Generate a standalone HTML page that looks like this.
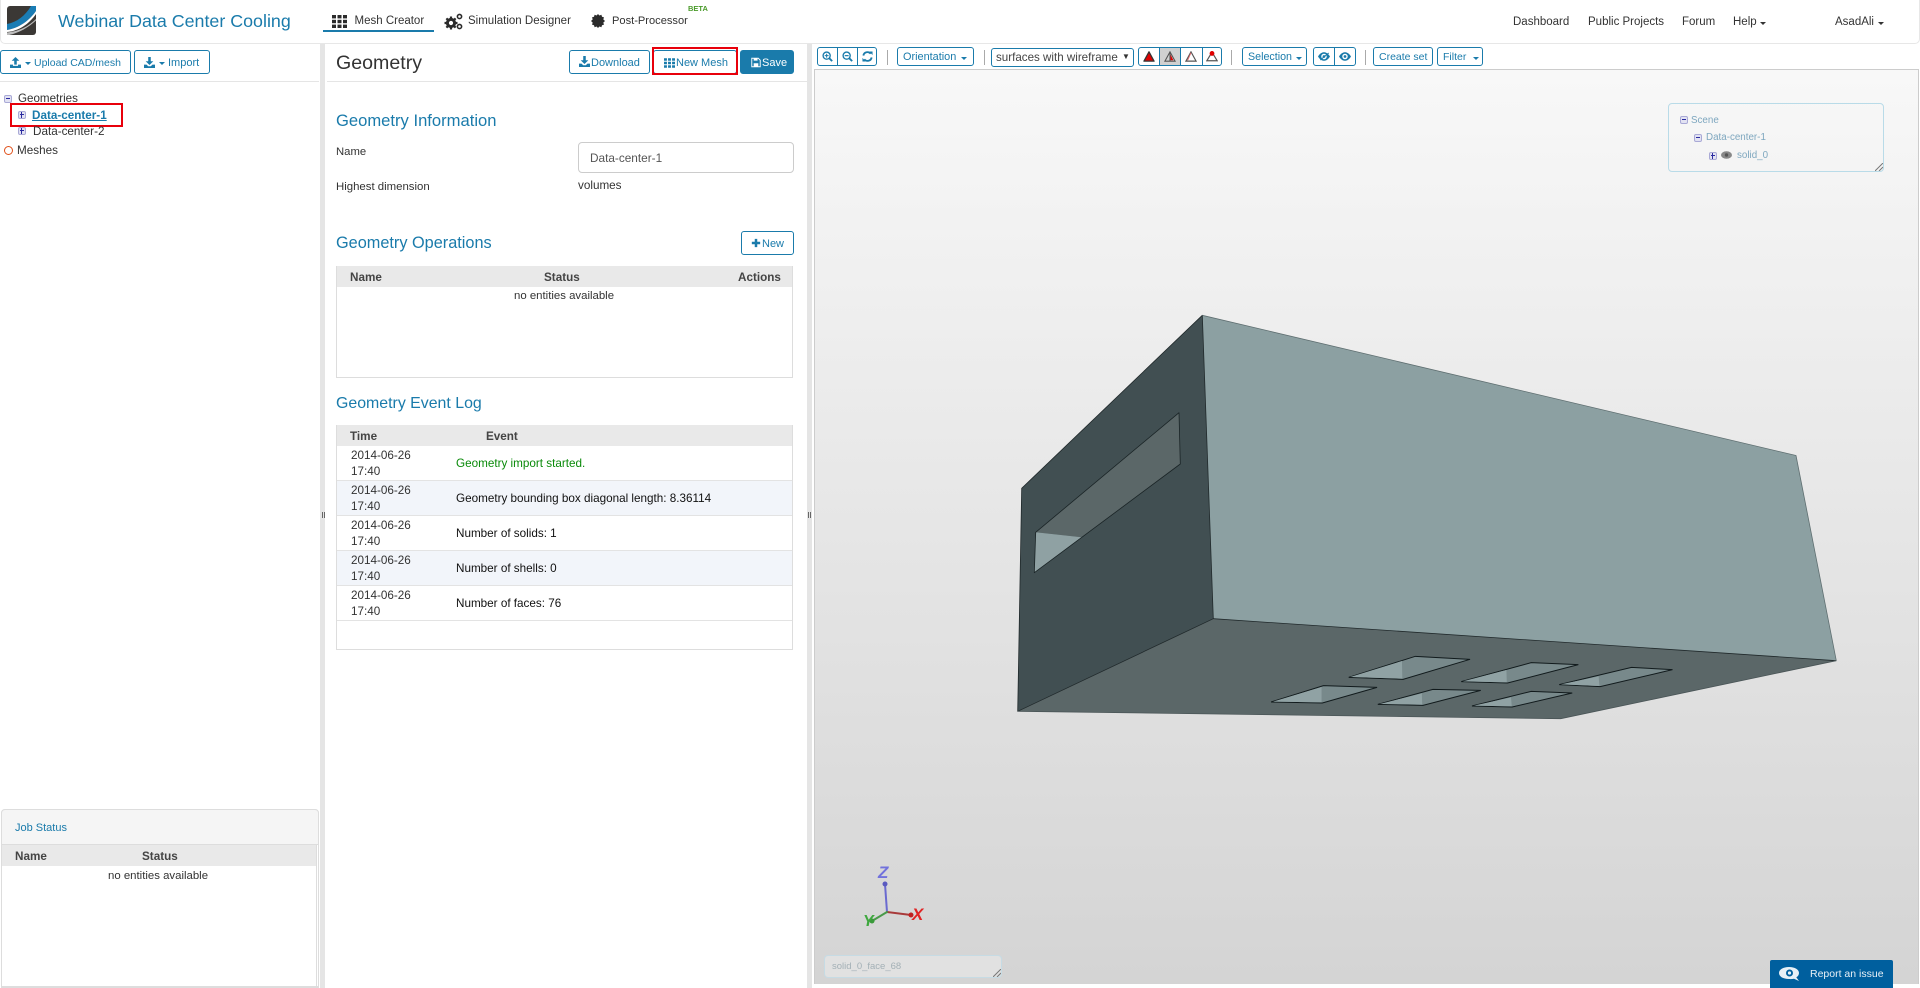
<!DOCTYPE html>
<html lang="en">
<head>
<meta charset="utf-8">
<title>Webinar Data Center Cooling</title>
<style>
html,body{margin:0;padding:0;width:1920px;height:988px;overflow:hidden;background:#fff;font-family:"Liberation Sans",sans-serif;color:#333}
.t{position:absolute;white-space:nowrap;line-height:16px;height:16px}
.b{position:absolute;box-sizing:border-box;}
.btn{position:absolute;box-sizing:border-box;border:1px solid #1a7bab;border-radius:3px;background:#fff;color:#1a7bab;font-size:11px;white-space:nowrap}
.btn .l{position:absolute;top:4px;line-height:16px;white-space:nowrap}
.btn svg,.ic{position:absolute}
.blue{color:#1a7bab}
.h{color:#1a7bab;line-height:20px;height:20px}
.nav{font-size:11.5px;color:#333}
.th{font-weight:bold;font-size:11.7px;color:#444}
.ev{font-size:11.7px;color:#111}
.dt{font-size:11.7px;color:#333}
.caret{position:absolute;width:0;height:0;border-left:3px solid transparent;border-right:3px solid transparent;border-top:3px solid currentColor}
.sep{position:absolute;width:1px;height:15px;top:50px;background:#aaa}
.tree{position:absolute;width:8px;height:8px;box-sizing:border-box;border:1px solid #a9a9d6;border-radius:2px;background:#e2e2f2}
.tree:before{content:"";position:absolute;left:1px;right:1px;top:2px;height:1px;background:#2a2aa0}
.tree.p:after{content:"";position:absolute;top:0;bottom:0;left:2px;width:1px;background:#2a2aa0}
.tw{color:#7ea7bf;font-size:9.8px}
</style>
</head>
<body>
<svg width="0" height="0" style="position:absolute">
<defs>
<symbol id="grid" viewBox="0 0 15 13"><g fill="currentColor"><rect x="0" y="0" width="4" height="3.4"/><rect x="5.5" y="0" width="4" height="3.4"/><rect x="11" y="0" width="4" height="3.4"/><rect x="0" y="4.8" width="4" height="3.4"/><rect x="5.5" y="4.8" width="4" height="3.4"/><rect x="11" y="4.8" width="4" height="3.4"/><rect x="0" y="9.6" width="4" height="3.4"/><rect x="5.5" y="9.6" width="4" height="3.4"/><rect x="11" y="9.6" width="4" height="3.4"/></g></symbol>
<symbol id="dl" viewBox="0 0 13 13"><path fill="currentColor" d="M5 0h3v5h3L6.500 9.500 2 5h3zM0 9h3l2 2h3l2-2h3v4H0z"/></symbol>
<symbol id="ul" viewBox="0 0 13 13"><path fill="currentColor" d="M6.500 0L11 4.500H8v4.500H5V4.500H2zM0 9h3.500v1.500h6V9H13v4H0z"/></symbol>
<symbol id="save" viewBox="0 0 13 13"><path fill="none" stroke="currentColor" stroke-width="1.200" d="M1 1h8.500L12 3.500V12H1z"/><path fill="currentColor" d="M3.500 1h5v3h-5zM3.500 7.500h6V12h-6z"/></symbol>
<symbol id="zoomin" viewBox="0 0 13 13"><circle cx="5.500" cy="5.500" r="4.200" fill="none" stroke="currentColor" stroke-width="1.600"/><path stroke="currentColor" stroke-width="2.200" d="M8.500 8.500l3.500 3.500"/><path stroke="currentColor" stroke-width="1.200" d="M3.200 5.500h4.600M5.500 3.200v4.600"/></symbol>
<symbol id="zoomout" viewBox="0 0 13 13"><circle cx="5.500" cy="5.500" r="4.200" fill="none" stroke="currentColor" stroke-width="1.600"/><path stroke="currentColor" stroke-width="2.200" d="M8.500 8.500l3.500 3.500"/><path stroke="currentColor" stroke-width="1.400" d="M3.200 5.500h4.600"/></symbol>
<symbol id="eye" viewBox="0 0 14 10"><path fill="currentColor" d="M0 5C2 1.500 4.500 0 7 0s5 1.500 7 5c-2 3.500-4.500 5-7 5S2 8.500 0 5zm7-3.200A3.200 3.200 0 1 0 7 8.200 3.200 3.200 0 0 0 7 1.800zM7 3.400a1.600 1.600 0 1 1 0 3.200 1.600 1.600 0 0 1 0-3.200z"/></symbol>
</defs>
</svg>

<!-- Navbar -->
<div class="b" style="left:0;top:0;width:1920px;height:44px;background:#fff;border:1px solid #e7e7e7;border-top:0;border-radius:0 0 5px 5px"></div>
<svg class="ic" style="left:7px;top:6px" width="29" height="29" viewBox="0 0 29 29">
<rect width="29" height="29" rx="3" fill="#3b3835"/>
<path d="M0 18C10 16 18 10 24 0h5v5C22 15 12 22 0 24z" fill="#1a7cb4"/>
<path d="M0 24C12 22 22 15 29 5v3C22 18 12 25 0 26z" fill="#fff"/>
<path d="M0 26.500C12 25.500 22 20 29 13v1.500C22 21 12 27 2 29H0z" fill="#bdbdbd"/>
</svg>
<div class="t blue" style="left:58px;top:13px;font-size:17.850px">Webinar Data Center Cooling</div>

<svg class="ic" style="left:332px;top:15px;color:#2b2b2b" width="15" height="13"><use href="#grid"/></svg>
<div class="t nav" style="left:354.500px;top:13px">Mesh Creator</div>
<div class="b" style="left:323px;top:30px;width:111px;height:2px;background:#1a7bab"></div>

<svg class="ic" style="left:444px;top:12px" width="20" height="19" viewBox="0 0 20 19">
<g fill="none" stroke="#2b2b2b"><circle cx="7" cy="11" r="3.600" stroke-width="3"/><path stroke-width="2.200" d="M7 4.500v2M7 15.500v2M.5 11h2M11.500 11h2M2.400 6.400l1.400 1.400M10.200 14.200l1.400 1.400M2.400 15.600l1.400-1.400M10.200 7.800l1.400-1.400"/><circle cx="15.500" cy="4.500" r="2.100" stroke-width="1.600"/><circle cx="15.500" cy="14.500" r="2.100" stroke-width="1.600"/></g>
</svg>
<div class="t nav" style="left:468px;top:13px">Simulation Designer</div>

<svg class="ic" style="left:591px;top:14px" width="14" height="14" viewBox="0 0 14 14">
<path fill="#2b2b2b" d="M7 0l1.400 1.500 2-.7.600 2 2 .6-.7 2L14 7l-1.700 1.600.7 2-2 .6-.6 2-2-.7L7 14l-1.400-1.500-2 .7-.6-2-2-.6.7-2L0 7l1.700-1.600-.7-2 2-.6.6-2 2 .7z"/>
</svg>
<div class="t nav" style="left:612px;top:13px;font-size:11.100px">Post-Processor</div>
<div class="t" style="left:688px;top:1px;font-size:7.500px;color:#4a9a2a;font-weight:bold">BETA</div>

<div class="t nav" style="left:1513px;top:14px">Dashboard</div>
<div class="t nav" style="left:1588px;top:14px">Public Projects</div>
<div class="t nav" style="left:1682px;top:14px">Forum</div>
<div class="t nav" style="left:1733px;top:14px">Help</div>
<div class="caret" style="left:1760px;top:22px;color:#333"></div>
<div class="t nav" style="left:1835px;top:14px">AsadAli</div>
<div class="caret" style="left:1878px;top:22px;color:#333"></div>

<!-- Splitters -->
<div class="b" style="left:320px;top:44px;width:5px;height:944px;background:#e5e5e5"></div>
<div class="b" style="left:807px;top:44px;width:5px;height:944px;background:#e5e5e5"></div>
<div class="b" style="left:322px;top:512px;width:1px;height:6px;background:#666"></div>
<div class="b" style="left:324px;top:512px;width:1px;height:6px;background:#666"></div>
<div class="b" style="left:808px;top:512px;width:1px;height:6px;background:#666"></div>
<div class="b" style="left:810px;top:512px;width:1px;height:6px;background:#666"></div>

<!-- Left panel -->
<div class="btn" style="left:0;top:50px;width:131px;height:24px">
<svg style="left:9px;top:6px;" width="11" height="11"><use href="#ul"/></svg>
<div class="caret" style="left:24px;top:11px"></div>
<span class="l" style="left:33px;font-size:10.500px">Upload CAD/mesh</span></div>
<div class="btn" style="left:134px;top:50px;width:76px;height:24px">
<svg style="left:9px;top:6px" width="11" height="11"><use href="#dl"/></svg>
<div class="caret" style="left:24px;top:11px"></div>
<span class="l" style="left:33px;font-size:11px">Import</span></div>
<div class="b" style="left:0;top:81px;width:319px;height:1px;background:#e5e5e5"></div>

<div class="tree" style="left:4px;top:95px"></div>
<div class="t" style="left:18px;top:91px;font-size:11.600px">Geometries</div>
<div class="tree p" style="left:18px;top:111px"></div>
<div class="t blue" style="left:32px;top:108px;font-size:11.700px;font-weight:bold;text-decoration:underline">Data-center-1</div>
<div class="b" style="left:10px;top:103px;width:113px;height:24px;border:2px solid #e8000b"></div>
<div class="tree p" style="left:18px;top:127px"></div>
<div class="t" style="left:33px;top:124px;font-size:11.700px">Data-center-2</div>
<div class="b" style="left:4px;top:146px;width:9px;height:9px;border:1.500px solid #e0501a;border-radius:50%"></div>
<div class="t" style="left:17px;top:143px;font-size:11.700px">Meshes</div>

<div class="b" style="left:1px;top:809px;width:318px;height:179px;border:1px solid #ddd;border-radius:4px 4px 0 0;background:#fff"></div>
<div class="b" style="left:1px;top:809px;width:318px;height:36px;background:#f5f5f5;border:1px solid #ddd;border-radius:4px 4px 0 0"></div>
<div class="t blue" style="left:15px;top:820px;font-size:11px">Job Status</div>
<div class="b" style="left:2px;top:845px;width:314px;height:21px;background:#e9e9e9"></div>
<div class="b" style="left:316px;top:845px;width:1px;height:141px;background:#ddd"></div>
<div class="b" style="left:1px;top:986px;width:318px;height:2px;background:#ddd"></div>
<div class="t th" style="left:15px;top:849px">Name</div>
<div class="t th" style="left:142px;top:849px">Status</div>
<div class="t" style="left:108px;top:868px;font-size:11.400px">no entities available</div>

<!-- Center panel -->
<div class="t" style="left:336px;top:53px;font-size:19.600px;line-height:20px;height:20px;color:#333">Geometry</div>
<div class="btn" style="left:569px;top:50px;width:81px;height:24px">
<svg style="left:9px;top:5px" width="11" height="11"><use href="#dl"/></svg>
<span class="l" style="left:21px">Download</span></div>
<div class="btn" style="left:653px;top:50px;width:84px;height:24px">
<svg style="left:10px;top:7px" width="11" height="10"><use href="#grid"/></svg>
<span class="l" style="left:22px">New Mesh</span></div>
<div class="b" style="left:652px;top:47px;width:86px;height:28px;border:2px solid #e8000b"></div>
<div class="btn" style="left:740px;top:50px;width:54px;height:24px;background:#1a7bab;color:#fff">
<svg style="left:10px;top:6px" width="10" height="11"><use href="#save"/></svg>
<span class="l" style="left:21px">Save</span></div>
<div class="b" style="left:327px;top:81px;width:480px;height:1px;background:#e5e5e5"></div>

<div class="t h" style="left:336px;top:111px;font-size:16.600px">Geometry Information</div>
<div class="t" style="left:336px;top:144px;font-size:11.300px">Name</div>
<div class="b" style="left:578px;top:142px;width:216px;height:31px;border:1px solid #ccc;border-radius:4px;background:#fff"></div>
<div class="t" style="left:590px;top:150px;font-size:11.800px;color:#555">Data-center-1</div>
<div class="t" style="left:336px;top:179px;font-size:11.400px">Highest dimension</div>
<div class="t" style="left:578px;top:178px;font-size:11.700px">volumes</div>

<div class="t h" style="left:336px;top:233px;font-size:16.300px">Geometry Operations</div>
<div class="btn" style="left:741px;top:231px;width:53px;height:24px">
<svg style="left:9px;top:6px" width="10" height="10" viewBox="0 0 12 12"><path fill="currentColor" d="M4.500 1h3v3.500H11v3H7.500V11h-3V7.500H1v-3h3.500z"/></svg>
<span class="l" style="left:20px">New</span></div>
<div class="b" style="left:336px;top:266px;width:457px;height:112px;border:1px solid #ddd;background:#fff"></div>
<div class="b" style="left:337px;top:266px;width:455px;height:21px;background:#e9e9e9"></div>
<div class="t th" style="left:350px;top:270px">Name</div>
<div class="t th" style="left:544px;top:270px">Status</div>
<div class="t th" style="left:738px;top:270px">Actions</div>
<div class="t" style="left:514px;top:288px;font-size:11.400px">no entities available</div>

<div class="t h" style="left:336px;top:394px;font-size:15.900px">Geometry Event Log</div>
<div class="b" style="left:336px;top:425px;width:457px;height:225px;border:1px solid #ddd;background:#fff"></div>
<div class="b" style="left:337px;top:425px;width:455px;height:21px;background:#e9e9e9"></div>
<div class="t th" style="left:350px;top:429px">Time</div>
<div class="t th" style="left:486px;top:429px">Event</div>
<div class="b" style="left:337px;top:480px;width:455px;height:36px;background:#f2f5fa"></div>
<div class="b" style="left:337px;top:550px;width:455px;height:35px;background:#f2f5fa"></div>
<div class="b" style="left:337px;top:480px;width:455px;height:1px;background:#e3e3e3"></div>
<div class="b" style="left:337px;top:515px;width:455px;height:1px;background:#e3e3e3"></div>
<div class="b" style="left:337px;top:550px;width:455px;height:1px;background:#e3e3e3"></div>
<div class="b" style="left:337px;top:585px;width:455px;height:1px;background:#e3e3e3"></div>
<div class="b" style="left:337px;top:620px;width:455px;height:1px;background:#e3e3e3"></div>

<div class="t dt" style="left:351px;top:448px">2014-06-26</div><div class="t dt" style="left:351px;top:464px">17:40</div>
<div class="t ev" style="left:456px;top:456px;color:#0a8a0a">Geometry import started.</div>
<div class="t dt" style="left:351px;top:483px">2014-06-26</div><div class="t dt" style="left:351px;top:499px">17:40</div>
<div class="t ev" style="left:456px;top:491px">Geometry bounding box diagonal length: 8.36114</div>
<div class="t dt" style="left:351px;top:518px">2014-06-26</div><div class="t dt" style="left:351px;top:534px">17:40</div>
<div class="t ev" style="left:456px;top:526px">Number of solids: 1</div>
<div class="t dt" style="left:351px;top:553px">2014-06-26</div><div class="t dt" style="left:351px;top:569px">17:40</div>
<div class="t ev" style="left:456px;top:561px">Number of shells: 0</div>
<div class="t dt" style="left:351px;top:588px">2014-06-26</div><div class="t dt" style="left:351px;top:604px">17:40</div>
<div class="t ev" style="left:456px;top:596px">Number of faces: 76</div>

<!-- Viewer toolbar -->
<div class="btn" style="left:817px;top:47px;width:60px;height:19px"></div>
<div class="b" style="left:837px;top:47px;width:1px;height:19px;background:#1a7bab"></div>
<div class="b" style="left:857px;top:47px;width:1px;height:19px;background:#1a7bab"></div>
<svg class="ic" style="left:822px;top:51px;color:#1a7bab" width="11" height="11"><use href="#zoomin"/></svg>
<svg class="ic" style="left:842px;top:51px;color:#1a7bab" width="11" height="11"><use href="#zoomout"/></svg>
<svg class="ic" style="left:862px;top:51px;color:#1a7bab" width="11" height="11" viewBox="0 0 12 12"><path fill="none" stroke="currentColor" stroke-width="2" d="M1.500 5A4.500 4.500 0 0 1 9.500 3M10.500 7A4.500 4.500 0 0 1 2.500 9"/><path fill="currentColor" d="M8 .500h3.500V4.500zM4 11.500H.5V7.500z"/></svg>
<div class="sep" style="left:887px"></div>
<div class="btn" style="left:897px;top:47px;width:77px;height:19px"><span class="l" style="left:5px;top:1px;font-size:10.900px">Orientation</span><div class="caret" style="left:63px;top:9px"></div></div>
<div class="sep" style="left:984px"></div>
<div class="btn" style="left:991px;top:48px;width:143px;height:19px;color:#444"><span class="l" style="left:4px;top:1px;font-size:11.600px">surfaces with wireframe</span><span style="position:absolute;left:130px;top:0;font-size:8px;line-height:15px;color:#333">▼</span></div>
<div class="btn" style="left:1138px;top:47px;width:84px;height:19px"></div>
<div class="b" style="left:1159px;top:48px;width:21px;height:17px;background:#d0d0d0"></div>
<div class="b" style="left:1159px;top:47px;width:1px;height:19px;background:#1a7bab"></div>
<div class="b" style="left:1180px;top:47px;width:1px;height:19px;background:#1a7bab"></div>
<div class="b" style="left:1202px;top:47px;width:1px;height:19px;background:#1a7bab"></div>
<svg class="ic" style="left:1143px;top:51px" width="12" height="11" viewBox="0 0 14 13"><path fill="#e00000" stroke="#333" stroke-width="1.500" d="M7 1l6 11H1z" stroke-linejoin="round"/></svg>
<svg class="ic" style="left:1164px;top:51px" width="12" height="11" viewBox="0 0 14 13"><path fill="#e00000" d="M7 3l4 8H7z"/><path stroke="#555" stroke-width="1.300" fill="none" d="M7 1l6 11H1zM7 1v11"/></svg>
<svg class="ic" style="left:1185px;top:51px" width="12" height="11" viewBox="0 0 14 13"><path fill="none" stroke="#555" stroke-width="1.400" d="M7 1l6 11H1z"/><path stroke="#e06060" fill="none" d="M7 2L3 11"/></svg>
<svg class="ic" style="left:1206px;top:50px" width="12" height="12" viewBox="0 0 14 13"><path fill="none" stroke="#555" stroke-width="1.400" d="M7 2l6 10H1z"/><circle cx="7" cy="3.500" r="2.800" fill="#e00000"/></svg>
<div class="sep" style="left:1231px"></div>
<div class="btn" style="left:1242px;top:47px;width:65px;height:19px"><span class="l" style="left:5px;top:1px;font-size:10.700px">Selection</span><div class="caret" style="left:53px;top:9px"></div></div>
<div class="btn" style="left:1313px;top:47px;width:43px;height:19px"></div>
<div class="b" style="left:1334px;top:47px;width:1px;height:19px;background:#1a7bab"></div>
<svg class="ic" style="left:1318px;top:52px;color:#1a7bab" width="12" height="9"><use href="#eye"/></svg>
<div class="b" style="left:1319px;top:56px;width:11px;height:1px;background:#1a7bab;transform:rotate(-40deg)"></div>
<svg class="ic" style="left:1339px;top:52px;color:#1a7bab" width="12" height="9"><use href="#eye"/></svg>
<div class="sep" style="left:1365px"></div>
<div class="btn" style="left:1373px;top:47px;width:60px;height:19px"><span class="l" style="left:5px;top:1px;font-size:10.500px">Create set</span></div>
<div class="btn" style="left:1437px;top:47px;width:46px;height:19px"><span class="l" style="left:5px;top:1px;font-size:10.500px">Filter</span><div class="caret" style="left:35px;top:9px"></div></div>

<!-- Viewer -->
<div class="b" style="left:814px;top:69px;width:1105px;height:915px;border:1px solid #ccc;border-bottom:0;background:linear-gradient(#f8f8f8,#d4d4d4)"></div>
<svg class="ic" style="left:0;top:0" width="1920" height="988">
<g stroke-linejoin="round">
<polygon points="1202.300,315.300 1796,455.500 1836.300,660.700 1213.300,618.700" fill="#8ca0a2"/>
<polygon points="1017.700,711.300 1213.300,618.700 1836.300,660.700 1560.700,718.700" fill="#5b6768"/>
<polygon points="1202.300,315.300 1021.700,488.300 1017.700,711.300 1213.300,618.700" fill="#414f52"/>
<polygon points="1035.700,532.300 1179,412.700 1180.300,464 1081.700,537.300" fill="#5b6768"/>
<polygon points="1035.700,532.300 1081.700,537.300 1034.300,572.700" fill="#8fa1a3"/>
<g fill="none" stroke="#1a2426" stroke-width=".8">
<path d="M1035.700 532.300L1179 412.700 1180.300 464 1034.300 572.700z"/>
<path d="M1202.300 315.300L1213.300 618.700 1017.700 711.300 1021.700 488.300z" stroke="#20292b"/>
<path d="M1213.300 618.700L1836.300 660.700" stroke="#20292b"/>
<path d="M1017.700 711.300L1560.700 718.700 1836.300 660.700" stroke="#4a5557"/>
<path d="M1202.300 315.300L1796 455.500 1836.300 660.700" stroke="#5f6f71"/>
</g>
</g>
<g transform="translate(1250,640) scale(.38270,.33333)">
<g fill="#78898b" stroke="#111a1c" stroke-width="1">
<polygon vector-effect="non-scaling-stroke" points="258,112 432,49 575,58 400,118"/>
<polygon vector-effect="non-scaling-stroke" points="552,125 735,68 858,74 673,129"/>
<polygon vector-effect="non-scaling-stroke" points="808,134 997,82 1104,89 915,140"/>
<polygon vector-effect="non-scaling-stroke" points="55,186 192,137 332,142 189,189"/>
<polygon vector-effect="non-scaling-stroke" points="334,193 478,148 603,151 452,196"/>
<polygon vector-effect="non-scaling-stroke" points="580,198 735,154 842,159 685,201"/>
</g>
<g fill="#90a2a4">
<polygon points="262,111 397,63 398,116"/>
<polygon points="556,124 670,90 671,127"/>
<polygon points="812,133 911,109 913,138"/>
<polygon points="60,185 187,141 187,187"/>
<polygon points="339,192 449,160 450,194"/>
<polygon points="585,197 682,172 684,199"/>
</g>
</g>
<!-- axes -->
<g stroke-linecap="round">
<line x1="887" y1="912" x2="885" y2="884" stroke="#6a6ad0" stroke-width="2"/>
<circle cx="885" cy="884" r="2.500" fill="#5a5ac0"/>
<line x1="887" y1="912" x2="911" y2="915" stroke="#a83a3a" stroke-width="2"/>
<circle cx="911" cy="915" r="2.500" fill="#c02020"/>
<line x1="887" y1="912" x2="872" y2="921" stroke="#4a9a4a" stroke-width="2"/>
<circle cx="872" cy="921" r="2.500" fill="#3a9a3a"/>
</g>
<text x="878" y="878" font-family="Liberation Sans,sans-serif" font-size="17" font-weight="bold" font-style="italic" fill="#7272dc">Z</text>
<text x="912" y="920" font-family="Liberation Sans,sans-serif" font-size="17" font-weight="bold" font-style="italic" fill="#e02424">X</text>
<text x="863" y="926" font-family="Liberation Sans,sans-serif" font-size="16" font-weight="bold" font-style="italic" fill="#3fa83f">Y</text>
</svg>

<!-- Scene tree -->
<div class="b" style="left:1668px;top:103px;width:216px;height:69px;border:1px solid #b9dbe8;border-radius:4px"></div>
<div class="tree" style="left:1680px;top:116px"></div>
<div class="t tw" style="left:1691px;top:113px">Scene</div>
<div class="tree" style="left:1694px;top:134px"></div>
<div class="t tw" style="left:1706px;top:130px">Data-center-1</div>
<div class="tree p" style="left:1709px;top:152px"></div>
<svg class="ic" style="left:1721px;top:151px;color:#777" width="11" height="8" viewBox="0 0 11 8"><ellipse cx="5.500" cy="4" rx="5.500" ry="3.800" fill="#888"/><circle cx="5.500" cy="4" r="1.700" fill="#555"/></svg>
<div class="t tw" style="left:1737px;top:148px">solid_0</div>
<svg class="ic" style="left:1875px;top:163px" width="8" height="8"><path stroke="#777" d="M0 8L8 0M4 8L8 4" fill="none"/></svg>

<!-- Selection box -->
<div class="b" style="left:824px;top:955px;width:178px;height:23px;border:1px solid #c6dbe4;border-radius:4px;background:rgba(255,255,255,.3)"></div>
<div class="t" style="left:832px;top:959px;font-size:9.500px;color:#a3b0b6">solid_0_face_68</div>
<svg class="ic" style="left:993px;top:969px" width="8" height="8"><path stroke="#777" d="M0 8L8 0M4 8L8 4" fill="none"/></svg>

<!-- Report -->
<div class="b" style="left:1770px;top:960px;width:123px;height:28px;background:#005f9e;border-radius:2px 2px 0 0"></div>
<svg class="ic" style="left:1779px;top:967px" width="22" height="15" viewBox="0 0 22 15"><path fill="#e8f0f6" d="M10 0c6 0 10 2.500 10 6 0 1.800-1 3.300-2.700 4.300L20 14l-5-2.300c-1.500.3-3.200.5-5 .3C4 12 0 9.500 0 6s4-6 10-6z"/><circle cx="10.500" cy="6" r="3.500" fill="#005f9e"/><circle cx="10.500" cy="6" r="1.600" fill="#e8f0f6"/></svg>
<div class="t" style="left:1810px;top:966px;font-size:10.500px;color:#e8f0f6">Report an issue</div>
</body>
</html>
